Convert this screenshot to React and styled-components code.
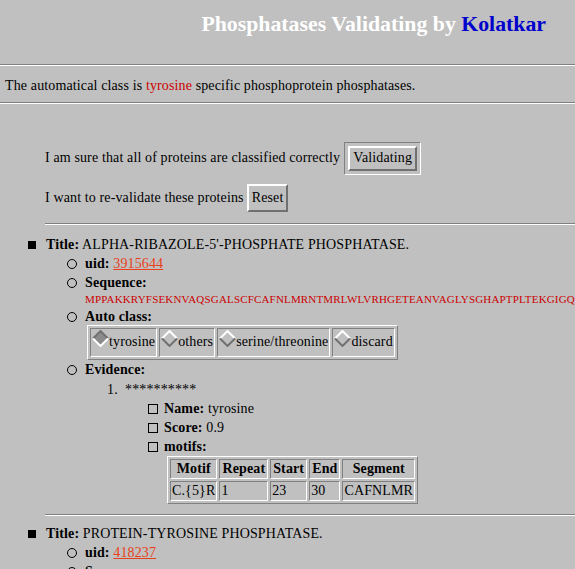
import styled, { createGlobalStyle } from 'styled-components'

const GlobalStyle = createGlobalStyle`
  html, body {
    margin: 0;
    padding: 0;
    background: #c0c0c0;
    overflow: hidden;
  }
  body {
    font-family: "Liberation Serif", "Times New Roman", serif;
    font-size: 14px;
    letter-spacing: 0.13px;
    color: #000;
  }
`

const Page = styled.div`
  width: 575px;
  height: 569px;
  overflow: hidden;
`

const Header = styled.h1`
  margin: 0;
  padding: 12px 29px 0 0;
  height: 64px;
  box-sizing: border-box;
  text-align: right;
  font-size: 21.8px;
  letter-spacing: 0;
  font-weight: bold;
  color: #ffffff;
`

const Author = styled.span`
  color: #0000cc;
`

const Rule = styled.div`
  height: 0;
  border-top: 1px solid #808080;
  border-bottom: 1px solid #ffffff;
  margin: ${p => p.$margin || '0'};
`

const Notice = styled.p`
  margin: 0;
  padding: 12px 5px 0;
  height: 36px;
  box-sizing: border-box;
`

const Red = styled.span`
  color: #cc0000;
`

const Form = styled.div`
  margin-left: 45px;
  padding-top: 35px;
`

const FormRow = styled.div`
  display: flex;
  align-items: center;
  gap: ${p => p.$gap || '4px'};
  height: ${p => p.$height};
`

const DefaultRing = styled.span`
  display: inline-flex;
  padding: 3px;
  border: 1px solid;
  border-color: #808080 #ffffff #ffffff #808080;
`

const Button = styled.button`
  font-family: inherit;
  font-size: 14px;
  letter-spacing: 0.13px;
  color: #000;
  background: #c0c0c0;
  padding: 0 3px;
  height: ${p => p.$height || '25px'};
  border: 2px solid;
  border-color: #ffffff #707070 #707070 #ffffff;
`

const List = styled.ul`
  list-style: none;
  margin: 0;
  padding: 0;
`

const Item = styled.li`
  position: relative;
  padding-left: ${p => p.$indent};
  line-height: ${p => p.$lh || '19px'};

  &::before {
    content: '';
    position: absolute;
    box-sizing: border-box;
    left: ${p => p.$bx};
    top: ${p => p.$by || '6px'};
    width: ${p => p.$bs || '8px'};
    height: ${p => p.$bs || '8px'};
    border: 1px solid #000;
    background: ${p => (p.$filled ? '#000' : 'transparent')};
    border-radius: ${p => (p.$round ? '50%' : '0')};
  }
`

const Label = styled.b`
  font-weight: bold;
`

const Link = styled.a`
  color: #e8401a;
  text-decoration: underline;
`

const Sequence = styled.div`
  color: #cc0000;
  font-size: 11px;
  letter-spacing: 0.17px;
  line-height: 15px;
  white-space: nowrap;
`

const ClassTable = styled.table`
  border-collapse: separate;
  border-spacing: 2px;
  border: 1px solid;
  border-color: #ffffff #808080 #808080 #ffffff;
  margin: -1px 0 0 2px;
`

const ClassCell = styled.td`
  border: 1px solid;
  border-color: #808080 #ffffff #ffffff #808080;
  padding: 4px 1px 4px 1px;
  white-space: nowrap;
  line-height: 18px;
`

const Choice = styled.label`
  display: inline-flex;
  align-items: center;
`

const Diamond = ({ checked }) => (
  <svg width="17" height="17" viewBox="0 0 17 17" style={{ marginTop: -8 }}>
    <polygon points="8.5,1 16,8.5 8.5,16 1,8.5" fill={checked ? '#8a8a8a' : '#c0c0c0'} />
    <polyline points="1,8.5 8.5,1 16,8.5" fill="none" stroke={checked ? '#707070' : '#ffffff'} strokeWidth="2" />
    <polyline points="1,8.5 8.5,16 16,8.5" fill="none" stroke={checked ? '#ffffff' : '#707070'} strokeWidth="2" />
  </svg>
)

const Ordered = styled.ol`
  margin: 0;
  padding: 1px 0 0;
  list-style: none;
`

const Numbered = styled.li`
  display: block;
  line-height: 19px;
`

const Num = styled.span`
  display: inline-block;
  width: 18px;
  padding-left: 22px;
`

const MotifTable = styled.table`
  border-collapse: separate;
  border-spacing: 2px;
  border: 1px solid;
  border-color: #ffffff #808080 #808080 #ffffff;
  margin: 0 0 0 3px;
`

const Th = styled.th`
  border: 1px solid;
  border-color: #808080 #ffffff #ffffff #808080;
  padding: 0 2px;
  line-height: 18px;
  white-space: nowrap;
`

const Td = styled.td`
  border: 1px solid;
  border-color: #808080 #ffffff #ffffff #808080;
  padding: 0 1px;
  line-height: 18px;
  white-space: nowrap;
`

const Section = styled.div`
  padding-top: ${p => p.$top || '10px'};
`

const classes = ['tyrosine', 'others', 'serine/threonine', 'discard']
const motifHead = ['Motif', 'Repeat', 'Start', 'End', 'Segment']
const motifRow = ['C.{5}R', '1', '23', '30', 'CAFNLMR']

const App = () => {
  return (
    <Page>
      <GlobalStyle />
      <Header>
        Phosphatases Validating by <Author>Kolatkar</Author>
      </Header>
      <Rule />
      <Notice>
        The automatical class is <Red>tyrosine</Red> specific phosphoprotein phosphatases.
      </Notice>
      <Rule />
      <Form>
        <FormRow $height="38px">
          I am sure that all of proteins are classified correctly
          <DefaultRing>
            <Button>Validating</Button>
          </DefaultRing>
        </FormRow>
        <FormRow $height="42px" $gap="3px">
          I want to re-validate these proteins
          <Button $height="28px">Reset</Button>
        </FormRow>
        <Rule $margin="4px 0 0" />
      </Form>
      <Section $top="10px">
        <List>
          <Item $indent="46px" $bx="28px" $filled $bs="8px">
            <Label>Title:</Label> ALPHA-RIBAZOLE-5'-PHOSPHATE PHOSPHATASE.
            <List>
              <Item $indent="39px" $bx="21px" $round $bs="10px" $by="5px">
                <Label>uid:</Label> <Link href="#">3915644</Link>
              </Item>
              <Item $indent="39px" $bx="21px" $round $bs="10px" $by="5px">
                <Label>Sequence:</Label>
                <Sequence>MPPAKKRYFSEKNVAQSGALSCFCAFNLMRNTMRLWLVRHGETEANVAGLYSGHAPTPLTEKGIGQ</Sequence>
              </Item>
              <Item $indent="39px" $bx="21px" $round $bs="10px" $by="5px">
                <Label>Auto class:</Label>
                <ClassTable>
                  <tbody>
                    <tr>
                      {classes.map((c, i) => (
                        <ClassCell key={c}>
                          <Choice>
                            <Diamond checked={i === 0} />
                            {c}
                          </Choice>
                        </ClassCell>
                      ))}
                    </tr>
                  </tbody>
                </ClassTable>
              </Item>
              <Item $indent="39px" $bx="21px" $round $bs="10px" $by="5px">
                <Label>Evidence:</Label>
                <Ordered>
                  <Numbered>
                    <Num>1.</Num>**********
                    <List>
                      <Item $indent="79px" $bx="63px" $bs="10px" $by="5px">
                        <Label>Name:</Label> tyrosine
                      </Item>
                      <Item $indent="79px" $bx="63px" $bs="10px" $by="5px">
                        <Label>Score:</Label> 0.9
                      </Item>
                      <Item $indent="79px" $bx="63px" $bs="10px" $by="5px">
                        <Label>motifs:</Label>
                        <MotifTable>
                          <thead>
                            <tr>
                              {motifHead.map(h => <Th key={h}>{h}</Th>)}
                            </tr>
                          </thead>
                          <tbody>
                            <tr>
                              {motifRow.map((d, i) => <Td key={i}>{d}</Td>)}
                            </tr>
                          </tbody>
                        </MotifTable>
                      </Item>
                    </List>
                  </Numbered>
                </Ordered>
              </Item>
            </List>
          </Item>
        </List>
      </Section>
      <Rule $margin="10px 0 0 45px" />
      <Section $top="8px">
        <List>
          <Item $indent="46px" $bx="28px" $filled $bs="8px">
            <Label>Title:</Label> PROTEIN-TYROSINE PHOSPHATASE.
            <List>
              <Item $indent="39px" $bx="21px" $round $bs="10px" $by="5px">
                <Label>uid:</Label> <Link href="#">418237</Link>
              </Item>
              <Item $indent="39px" $bx="21px" $round $bs="10px" $by="5px">
                <Label>Sequence:</Label>
              </Item>
            </List>
          </Item>
        </List>
      </Section>
    </Page>
  )
}

export default App
